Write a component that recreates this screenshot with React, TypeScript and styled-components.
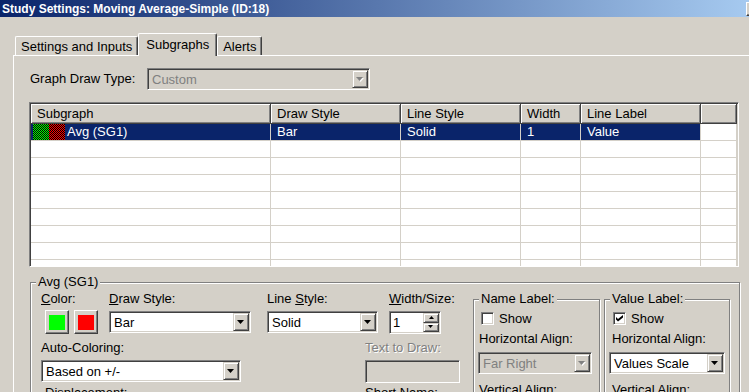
import React from 'react';
import styled, { createGlobalStyle } from 'styled-components';

const GlobalStyle = createGlobalStyle`
  html, body {
    margin: 0;
    padding: 0;
    background: #d4d0c8;
  }
  body {
    font-family: 'Liberation Sans', Arial, sans-serif;
    font-size: 13px;
    color: #000;
  }
`;

const sunken = `
  border: 1px solid;
  border-color: #808080 #fff #fff #808080;
  box-shadow: inset 1px 1px #404040, inset -1px -1px #d4d0c8;
`;

const raised = `
  border: 1px solid;
  border-color: #fff #404040 #404040 #fff;
  box-shadow: inset -1px -1px #808080;
`;

const Window = styled.div`
  width: 749px;
  height: 392px;
  overflow: hidden;
  background: #d4d0c8;
  display: flex;
  flex-direction: column;
`;

const TitleBar = styled.div`
  flex: none;
  height: 17px;
  display: flex;
  align-items: center;
  padding-left: 2px;
  background: linear-gradient(to right, #0a246a, #a6caf0);
  color: #fff;
  font: bold 12px 'Liberation Sans', Arial, sans-serif;
  white-space: nowrap;
`;

const TitleButton = styled.div`
  flex: none;
  margin-left: auto;
  margin-right: -13px;
  width: 16px;
  height: 14px;
  box-sizing: border-box;
  background: #d4d0c8;
  ${raised}
`;

const TabStrip = styled.div`
  flex: none;
  display: flex;
  align-items: flex-end;
  height: 22px;
  margin-top: 16px;
  padding-left: 15px;
`;

const Tab = styled.div<{ $active?: boolean }>`
  box-sizing: border-box;
  position: relative;
  z-index: ${(p) => (p.$active ? 1 : 0)};
  height: ${(p) => (p.$active ? 23 : 19)}px;
  margin-bottom: ${(p) => (p.$active ? -1 : 0)}px;
  padding: ${(p) => (p.$active ? '0 7px 2px 7px' : '0 5px')};
  display: flex;
  align-items: center;
  background: #d4d0c8;
  border-top: 1px solid #fff;
  border-left: 1px solid #fff;
  border-right: 1px solid #404040;
  border-radius: 2px 2px 0 0;
  box-shadow: inset -1px 0 #808080;
  white-space: nowrap;
`;

const Panel = styled.div`
  flex: 1;
  min-height: 0;
  margin-left: 13px;
  border-top: 1px solid #fff;
  border-left: 1px solid #fff;
  padding: 12px 0 0 15px;
  display: flex;
  flex-direction: column;
  align-items: flex-start;
`;

const DrawTypeRow = styled.div`
  flex: none;
  display: flex;
  align-items: center;
  padding-left: 1px;
`;

const Label = styled.div<{ $w?: number; $ml?: number; $disabled?: boolean }>`
  flex: none;
  width: ${(p) => (p.$w ? `${p.$w}px` : 'auto')};
  margin-left: ${(p) => p.$ml ?? 0}px;
  height: 16px;
  line-height: 16px;
  white-space: nowrap;
  color: ${(p) => (p.$disabled ? '#808080' : '#000')};
  text-shadow: ${(p) => (p.$disabled ? '1px 1px 0 #fff' : 'none')};
`;

const Combo = styled.div<{ $w: number; $ml?: number; $mt?: number; $disabled?: boolean }>`
  flex: none;
  box-sizing: border-box;
  width: ${(p) => p.$w}px;
  height: 22px;
  margin-left: ${(p) => p.$ml ?? 0}px;
  margin-top: ${(p) => p.$mt ?? 0}px;
  padding: 1px;
  display: flex;
  align-items: center;
  background: ${(p) => (p.$disabled ? '#d4d0c8' : '#fff')};
  color: ${(p) => (p.$disabled ? '#808080' : '#000')};
  ${sunken}
`;

const ComboText = styled.span`
  flex: 1;
  padding-left: 3px;
  white-space: nowrap;
  overflow: hidden;
`;

const DropButton = styled.div`
  flex: none;
  box-sizing: border-box;
  width: 16px;
  height: 18px;
  display: flex;
  align-items: center;
  justify-content: center;
  background: #d4d0c8;
  border: 1px solid;
  border-color: #d4d0c8 #404040 #404040 #d4d0c8;
  box-shadow: inset 1px 1px #fff, inset -1px -1px #808080;
`;

const ListView = styled.div`
  flex: none;
  box-sizing: border-box;
  width: 710px;
  height: 165px;
  margin-top: 12px;
  padding: 1px;
  background: #fff;
  overflow: hidden;
  ${sunken}
`;

const columns = '240px 130px 120px 60px 120px 1fr';

const HeaderRow = styled.div`
  display: grid;
  grid-template-columns: ${columns};
  height: 20px;
`;

const HeaderCell = styled.div`
  box-sizing: border-box;
  display: flex;
  align-items: center;
  padding-left: 6px;
  background: #d4d0c8;
  border-right: 1px solid #404040;
  border-bottom: 1px solid #404040;
  box-shadow: inset 1px 1px #fff, inset -1px -1px #808080;
  white-space: nowrap;
`;

const DataRow = styled.div`
  display: grid;
  grid-template-columns: ${columns};
  height: 17px;
`;

const DataCell = styled.div<{ $selected?: boolean; $pl?: number }>`
  box-sizing: border-box;
  display: flex;
  align-items: center;
  padding-left: ${(p) => p.$pl ?? 6}px;
  border-right: 1px solid #d4d0c8;
  border-bottom: 1px solid #d4d0c8;
  background: ${(p) => (p.$selected ? '#0a246a' : '#fff')};
  color: ${(p) => (p.$selected ? '#fff' : '#000')};
  white-space: nowrap;
  line-height: 16px;
`;

const SwatchLabel = styled.span`
  margin-left: 2px;
`;

const GroupBox = styled.fieldset<{ $w: number; $ml?: number; $mt?: number; $pl: number }>`
  flex: none;
  box-sizing: border-box;
  min-width: 0;
  width: ${(p) => p.$w}px;
  margin: ${(p) => p.$mt ?? 0}px 0 0 ${(p) => p.$ml ?? 0}px;
  padding: 0 0 0 ${(p) => p.$pl}px;
  border: 1px solid #808080;
  box-shadow: inset 1px 1px #fff, 1px 1px #fff;
`;

const GroupTitle = styled.legend<{ $ml?: number }>`
  margin-left: ${(p) => p.$ml ?? 0}px;
  padding: 0 2px;
  line-height: 16px;
  background: #d4d0c8;
`;

const AvgBody = styled.div`
  display: flex;
  align-items: flex-start;
  padding-top: 1px;
  height: 130px;
`;

const LeftArea = styled.div`
  flex: none;
  width: 432px;
  display: flex;
  flex-direction: column;
`;

const FieldRow = styled.div<{ $mt?: number }>`
  display: flex;
  align-items: flex-start;
  margin-top: ${(p) => p.$mt ?? 0}px;
`;

const Field = styled.div<{ $w: number; $ml?: number }>`
  flex: none;
  width: ${(p) => p.$w}px;
  margin-left: ${(p) => p.$ml ?? 0}px;
  display: flex;
  flex-direction: column;
  gap: 4px;
`;

const ColorButtons = styled.div`
  display: flex;
  gap: 5px;
  margin: -1px 0 0 4px;
`;

const ColorButton = styled.div`
  box-sizing: border-box;
  width: 24px;
  height: 24px;
  display: flex;
  align-items: center;
  justify-content: center;
  background: #d4d0c8;
  ${raised}
`;

const ColorFill = styled.span<{ $color: string }>`
  width: 16px;
  height: 15px;
  background: ${(p) => p.$color};
`;

const Spinner = styled.div`
  box-sizing: border-box;
  width: 52px;
  height: 23px;
  padding: 1px;
  display: flex;
  background: #fff;
  ${sunken}
`;

const SpinText = styled.span`
  flex: 1;
  padding-left: 2px;
  line-height: 19px;
`;

const SpinButtons = styled.div`
  flex: none;
  width: 16px;
  display: flex;
  flex-direction: column;
`;

const SpinButton = styled.div`
  flex: 1;
  box-sizing: border-box;
  display: flex;
  align-items: center;
  justify-content: center;
  background: #d4d0c8;
  border: 1px solid;
  border-color: #d4d0c8 #404040 #404040 #d4d0c8;
  box-shadow: inset 1px 1px #fff, inset -1px -1px #808080;
`;

const Edit = styled.div<{ $w: number }>`
  box-sizing: border-box;
  width: ${(p) => p.$w}px;
  height: 23px;
  background: #d4d0c8;
  ${sunken}
`;

const CheckRow = styled.label<{ $ml?: number }>`
  display: flex;
  align-items: center;
  gap: 5px;
  height: 16px;
  margin: 3px 0 0 ${(p) => p.$ml ?? 0}px;
`;

const CheckBox = styled.span`
  flex: none;
  box-sizing: border-box;
  width: 13px;
  height: 13px;
  display: flex;
  align-items: center;
  justify-content: center;
  background: #fff;
  ${sunken}
`;

const GroupLabel = styled(Label)<{ $mt: number }>`
  margin-top: ${(p) => p.$mt}px;
`;

// dithered colour icon shown in the subgraph list
const Swatch = ({ color, id }: { color: string; id: string }) => (
  <svg width="16" height="16" viewBox="0 0 16 16" shapeRendering="crispEdges">
    <defs>
      <pattern id={id} width="2" height="2" patternUnits="userSpaceOnUse">
        <rect width="2" height="2" fill="#000" />
        <rect width="1" height="1" fill={color} />
        <rect x="1" y="1" width="1" height="1" fill={color} />
      </pattern>
    </defs>
    <rect width="16" height="16" fill={`url(#${id})`} />
  </svg>
);

const Arrow = ({ disabled, small }: { disabled?: boolean; small?: boolean }) => {
  const w = small ? 5 : 7;
  const h = small ? 3 : 4;
  return (
    <svg width={w + 1} height={h + 1} viewBox={`0 0 ${w + 1} ${h + 1}`}>
      {disabled && <polygon points={`1,1 ${w + 1},1 ${(w + 2) / 2},${h + 1}`} fill="#fff" />}
      <polygon points={`0,0 ${w},0 ${w / 2},${h}`} fill={disabled ? '#808080' : '#000'} />
    </svg>
  );
};

const UpArrow = () => (
  <svg width="5" height="3" viewBox="0 0 5 3">
    <polygon points="0,3 5,3 2.5,0" fill="#000" />
  </svg>
);

const CheckMark = () => (
  <svg width="7" height="7" viewBox="0 0 7 7">
    <polygon points="0,2 2,4 7,0 7,2.6 2,6.6 0,4.6" fill="#000" />
  </svg>
);

type ComboProps = { w: number; value: string; disabled?: boolean; ml?: number; mt?: number };

const ComboBox = ({ w, value, disabled, ml, mt }: ComboProps) => (
  <Combo $w={w} $disabled={disabled} $ml={ml} $mt={mt}>
    <ComboText>{value}</ComboText>
    <DropButton>
      <Arrow disabled={disabled} />
    </DropButton>
  </Combo>
);

const headers = ['Subgraph', 'Draw Style', 'Line Style', 'Width', 'Line Label', ''];
const emptyRows = Array.from({ length: 8 });

const App: React.FC = () => {
  return (
    <>
      <GlobalStyle />
      <Window>
        <TitleBar>
          Study Settings: Moving Average-Simple (ID:18)
          <TitleButton />
        </TitleBar>
        <TabStrip>
          <Tab>Settings and Inputs</Tab>
          <Tab $active>Subgraphs</Tab>
          <Tab>Alerts</Tab>
        </TabStrip>
        <Panel>
          <DrawTypeRow>
            <Label $w={117}>Graph Draw Type:</Label>
            <ComboBox w={223} value="Custom" disabled />
          </DrawTypeRow>

          <ListView>
            <HeaderRow>
              {headers.map((h, i) => (
                <HeaderCell key={i}>{h}</HeaderCell>
              ))}
            </HeaderRow>
            <DataRow>
              <DataCell $selected $pl={2}>
                <Swatch color="#00ff00" id="dither-up" />
                <Swatch color="#ff0000" id="dither-down" />
                <SwatchLabel>Avg (SG1)</SwatchLabel>
              </DataCell>
              <DataCell $selected>Bar</DataCell>
              <DataCell $selected>Solid</DataCell>
              <DataCell $selected>1</DataCell>
              <DataCell $selected>Value</DataCell>
              <DataCell />
            </DataRow>
            {emptyRows.map((_, r) => (
              <DataRow key={r}>
                {headers.map((_h, c) => (
                  <DataCell key={c} />
                ))}
              </DataRow>
            ))}
          </ListView>

          <GroupBox $w={710} $ml={1} $mt={7} $pl={10}>
            <GroupTitle $ml={-5}>Avg (SG1)</GroupTitle>
            <AvgBody>
              <LeftArea>
                <FieldRow>
                  <Field $w={68}>
                    <Label>
                      <u>C</u>olor:
                    </Label>
                    <ColorButtons>
                      <ColorButton>
                        <ColorFill $color="#00ff00" />
                      </ColorButton>
                      <ColorButton>
                        <ColorFill $color="#ff0000" />
                      </ColorButton>
                    </ColorButtons>
                  </Field>
                  <Field $w={142}>
                    <Label>
                      <u>D</u>raw Style:
                    </Label>
                    <ComboBox w={142} value="Bar" />
                  </Field>
                  <Field $w={111} $ml={16}>
                    <Label>
                      Line <u>S</u>tyle:
                    </Label>
                    <ComboBox w={111} value="Solid" />
                  </Field>
                  <Field $w={52} $ml={11}>
                    <Label>
                      <u>W</u>idth/Size:
                    </Label>
                    <Spinner>
                      <SpinText>1</SpinText>
                      <SpinButtons>
                        <SpinButton>
                          <UpArrow />
                        </SpinButton>
                        <SpinButton>
                          <Arrow small />
                        </SpinButton>
                      </SpinButtons>
                    </Spinner>
                  </Field>
                </FieldRow>

                <FieldRow $mt={6}>
                  <Field $w={200}>
                    <Label>Auto-Coloring:</Label>
                    <ComboBox w={200} value="Based on +/-" />
                  </Field>
                  <Field $w={95} $ml={124}>
                    <Label $disabled>Text to Draw:</Label>
                    <Edit $w={95} />
                  </Field>
                </FieldRow>

                <FieldRow $mt={2}>
                  <Field $w={100} $ml={4}>
                    <Label>Displacement:</Label>
                  </Field>
                  <Field $w={95} $ml={220}>
                    <Label>Short Name:</Label>
                  </Field>
                </FieldRow>
              </LeftArea>

              <GroupBox $w={127} $pl={5}>
                <GroupTitle>Name Label:</GroupTitle>
                <CheckRow $ml={2}>
                  <CheckBox />
                  Show
                </CheckRow>
                <GroupLabel $mt={5}>Horizontal Align:</GroupLabel>
                <ComboBox w={114} value="Far Right" disabled ml={-1} mt={5} />
                <GroupLabel $mt={8}>Vertical Align:</GroupLabel>
              </GroupBox>

              <GroupBox $w={126} $ml={4} $pl={5}>
                <GroupTitle>Value Label:</GroupTitle>
                <CheckRow $ml={3}>
                  <CheckBox>
                    <CheckMark />
                  </CheckBox>
                  Show
                </CheckRow>
                <GroupLabel $mt={5} $ml={2}>
                  Horizontal Align:
                </GroupLabel>
                <ComboBox w={116} value="Values Scale" ml={-1} mt={5} />
                <GroupLabel $mt={8} $ml={2}>
                  Vertical Align:
                </GroupLabel>
              </GroupBox>
            </AvgBody>
          </GroupBox>
        </Panel>
      </Window>
    </>
  );
};

export default App;
